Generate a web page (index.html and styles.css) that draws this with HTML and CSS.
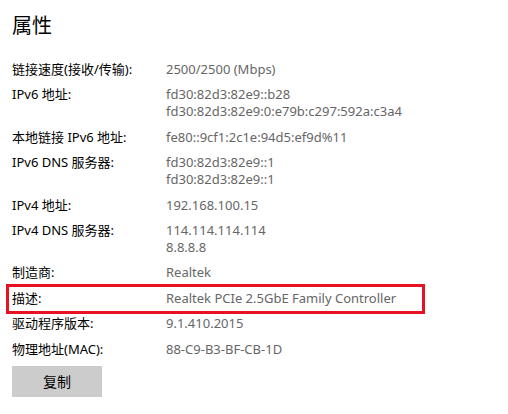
FILE: index.html
```html
<!DOCTYPE html>
<html lang="zh-CN">
<head>
<meta charset="utf-8">
<title>属性</title>
<link rel="stylesheet" href="styles.css">
</head>
<body>
<main class="panel">
  <h1 class="title">属性</h1>
  <div class="props">
    <div class="row"><div class="label">链接速度(接收/传输):</div><div class="value">2500/2500 (Mbps)</div></div>
    <div class="row"><div class="label">IPv6 地址:</div><div class="value">fd30:82d3:82e9::b28<br>fd30:82d3:82e9:0:e79b:c297:592a:c3a4</div></div>
    <div class="row"><div class="label">本地链接 IPv6 地址:</div><div class="value">fe80::9cf1:2c1e:94d5:ef9d%11</div></div>
    <div class="row"><div class="label">IPv6 DNS 服务器:</div><div class="value">fd30:82d3:82e9::1<br>fd30:82d3:82e9::1</div></div>
    <div class="row"><div class="label">IPv4 地址:</div><div class="value">192.168.100.15</div></div>
    <div class="row"><div class="label">IPv4 DNS 服务器:</div><div class="value">114.114.114.114<br>8.8.8.8</div></div>
    <div class="row"><div class="label">制造商:</div><div class="value">Realtek</div></div>
    <div class="row highlight"><div class="label">描述:</div><div class="value">Realtek PCIe 2.5GbE Family Controller</div></div>
    <div class="row"><div class="label">驱动程序版本:</div><div class="value">9.1.410.2015</div></div>
    <div class="row"><div class="label">物理地址(MAC):</div><div class="value">88-C9-B3-BF-CB-1D</div></div>
  </div>
  <button class="copy" type="button">复制</button>
</main>
</body>
</html>
```
FILE: styles.css
```css
html, body {
  margin: 0;
  padding: 0;
  background: #ffffff;
}
body {
  font-family: "Noto Sans", "Open Sans", "Noto Sans CJK SC", sans-serif;
  font-size: 13px;
  color: #000000;
}
.panel {
  padding: 11px 12px 0 12px;
  display: flex;
  flex-direction: column;
  align-items: flex-start;
}
.title {
  margin: 0;
  font-family: "Noto Sans CJK SC", sans-serif;
  font-size: 20px;
  font-weight: 400;
  line-height: 28px;
  color: #000;
}
.props {
  margin-top: 22px;
  display: flex;
  flex-direction: column;
  gap: 8.4px;
  align-self: stretch;
}
.row {
  display: flex;
  line-height: 17px;
}
.label {
  width: 154px;
  flex: none;
  color: #000;
  font-family: "Noto Sans", "Noto Sans CJK SC", sans-serif;
}
.value {
  color: #666666;
}
.highlight {
  position: relative;
}
.highlight::after {
  content: "";
  position: absolute;
  left: -6px;
  top: -6px;
  width: 413px;
  height: 24px;
  border: 3px solid #e81123;
  pointer-events: none;
}
.copy {
  margin-top: 8px;
  width: 90px;
  height: 31px;
  border: none;
  background: #cccccc;
  font-family: "Noto Sans CJK SC", sans-serif;
  font-size: 14px;
  color: #000;
  padding: 0;
}
```
